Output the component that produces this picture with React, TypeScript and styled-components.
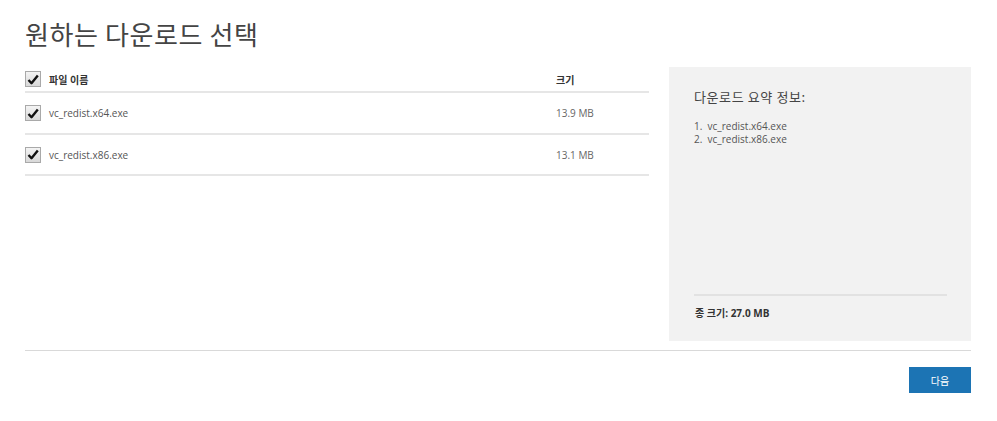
import styled, {createGlobalStyle} from "styled-components";

const GlobalStyle = createGlobalStyle`
  body {
    margin: 0;
    background: #ffffff;
    font-family: "Open Sans", "Noto Sans CJK KR", sans-serif;
    color: #333;
  }
`;

const Page = styled.div`
  width: 997px;
  height: 421px;
  padding: 18px 26px 0 25px;
  box-sizing: border-box;
`;

const Title = styled.h1`
  margin: 0 0 17px 0;
  font-family: "Noto Sans CJK KR", sans-serif;
  font-weight: 400;
  font-size: 26px;
  line-height: 32px;
  letter-spacing: 0.6px;
  color: #444;
`;

const Content = styled.div`
  display: flex;
  gap: 20px;
  height: 274px;
  border-bottom: 1px solid #d9d9d9;
  padding-bottom: 9px;
`;

const Table = styled.div`
  width: 624px;
  display: flex;
  flex-direction: column;
`;

const Row = styled.div<{header?: boolean}>`
  display: flex;
  align-items: center;
  height: ${p => (p.header ? "26px" : "41.5px")};
  border-bottom: 2px solid #e6e6e6;
  box-sizing: border-box;
  padding-top: ${p => (p.header ? "0" : "1px")};
`;

const Check = styled.span`
  width: 14px;
  height: 14px;
  border: 1px solid #a9a9a9;
  background: linear-gradient(#f4f4f4, #d8d8d8);
  display: flex;
  align-items: center;
  justify-content: center;
  margin-right: 8px;
  flex-shrink: 0;
`;

const NameCell = styled.span<{bold?: boolean}>`
  flex: 1;
  font-size: 10px;
  font-weight: ${p => (p.bold ? 700 : 400)};
  color: ${p => (p.bold ? "#333" : "#555")};
`;

const SizeCell = styled.span<{bold?: boolean}>`
  width: 93px;
  font-size: 10px;
  font-weight: ${p => (p.bold ? 700 : 400)};
  color: ${p => (p.bold ? "#333" : "#666")};
`;

const Summary = styled.div`
  width: 302px;
  background: #f2f2f2;
  padding: 20px 24px 0 25px;
  box-sizing: border-box;
  display: flex;
  flex-direction: column;
`;

const SummaryTitle = styled.div`
  font-family: "Noto Sans CJK KR", sans-serif;
  font-size: 13px;
  color: #444;
  letter-spacing: 0.6px;
  margin-bottom: 14px;
`;

const List = styled.ol`
  margin: 0;
  padding: 0;
  list-style: none;
  font-size: 10px;
  line-height: 13px;
  color: #555;
  flex: 1;
`;

const Total = styled.div`
  border-top: 2px solid #e2e2e2;
  padding: 9px 0 21px 1px;
  font-size: 10px;
  font-weight: 700;
  color: #333;
`;

const Footer = styled.div`
  display: flex;
  justify-content: flex-end;
  padding-top: 16px;
`;

const NextButton = styled.button`
  width: 62px;
  height: 26px;
  border: none;
  background: #1c74b4;
  color: #fff;
  font-family: "Noto Sans CJK KR", sans-serif;
  font-size: 10px;
  cursor: pointer;
`;

const files = [
    {name: "vc_redist.x64.exe", size: "13.9 MB"},
    {name: "vc_redist.x86.exe", size: "13.1 MB"},
];

function CheckMark() {
    return <Check>
        <svg width="12" height="11" viewBox="0 0 12 11">
            <path d="M1.5 6 L4.5 9.2 L10.8 1.5" fill="none" stroke="#111" strokeWidth="2.4" strokeLinejoin="round"/>
        </svg>
    </Check>;
}

function App() {
    return <Page>
        <GlobalStyle/>
        <Title>원하는 다운로드 선택</Title>
        <Content>
            <Table>
                <Row header>
                    <CheckMark/>
                    <NameCell bold>파일 이름</NameCell>
                    <SizeCell bold>크기</SizeCell>
                </Row>
                {files.map(f => (
                    <Row key={f.name}>
                        <CheckMark/>
                        <NameCell>{f.name}</NameCell>
                        <SizeCell>{f.size}</SizeCell>
                    </Row>
                ))}
            </Table>
            <Summary>
                <SummaryTitle>다운로드 요약 정보:</SummaryTitle>
                <List>
                    {files.map((f, i) => <li key={f.name}>{i + 1}.&nbsp; {f.name}</li>)}
                </List>
                <Total>종 크기: 27.0 MB</Total>
            </Summary>
        </Content>
        <Footer>
            <NextButton>다음</NextButton>
        </Footer>
    </Page>;
}

export default App;
